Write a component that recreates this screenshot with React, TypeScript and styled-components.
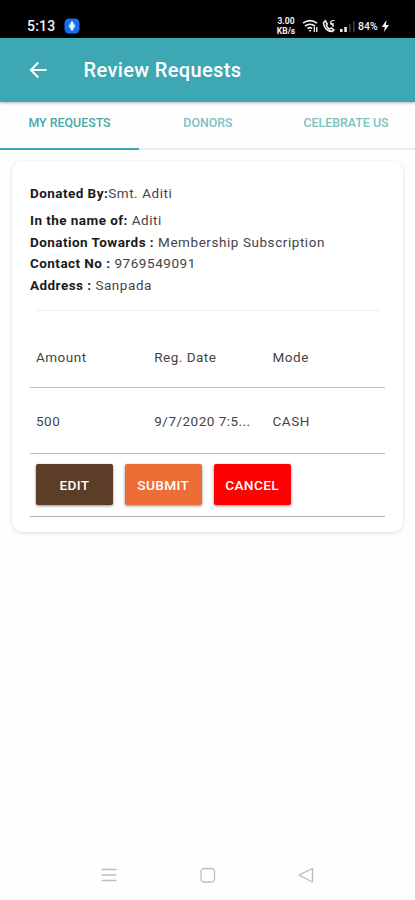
import React from "react";
import styled, { createGlobalStyle } from "styled-components";

const GlobalStyle = createGlobalStyle`
  * { box-sizing: border-box; }
  body { margin: 0; background: #fff; font-family: Roboto, sans-serif; }
`;

const Screen = styled.div`
  width: 415px;
  height: 900px;
  display: flex;
  flex-direction: column;
  background: #fefefe;
  overflow: hidden;
  white-space: nowrap;
`;

const StatusBar = styled.div`
  height: 38px;
  flex: none;
  padding: 14px 25px 0 27px;
  display: flex;
  align-items: center;
  background: #000;
  color: #f2f2f2;
`;

const Clock = styled.span`
  width: 37px;
  font-size: 14px;
  font-weight: 500;
  letter-spacing: 0.2px;
`;

const StatusIcons = styled.div`
  margin-left: auto;
  display: flex;
  align-items: center;
`;

const Speed = styled.div`
  width: 20px;
  margin-right: 6px;
  font-size: 8.5px;
  line-height: 10px;
  font-weight: 700;
  text-align: center;
`;

const Battery = styled.span`
  width: 23px;
  margin-left: 2px;
  font-size: 10.5px;
  font-weight: 500;
`;

const Header = styled.header`
  height: 64px;
  flex: none;
  padding-left: 28.5px;
  display: flex;
  align-items: center;
  gap: 37px;
  background: #3da7b4;
  color: #fff;
  box-shadow: 0 1px 3px rgba(0, 0, 0, 0.3);
  z-index: 1;
`;

const Title = styled.h1`
  margin: 0;
  font-size: 20px;
  font-weight: 500;
  letter-spacing: 0.36px;
`;

const Tabs = styled.nav`
  height: 48px;
  flex: none;
  display: grid;
  grid-template-columns: 139px 138px 138px;
`;

const Tab = styled.div<{ $active?: boolean }>`
  padding-top: 12.5px;
  text-align: center;
  font-size: 12.4px;
  line-height: 15px;
  font-weight: 500;
  color: ${(p) => (p.$active ? "#49a8a8" : "#7dc1bf")};
  border-bottom: 2px solid ${(p) => (p.$active ? "#3da7b4" : "#eeeeee")};
`;

const Card = styled.main`
  width: 391px;
  height: 371px;
  margin: 11px 0 0 12px;
  padding: 22px 18px 0;
  flex: none;
  border-radius: 11px;
  background: #fff;
  box-shadow: 0 1px 4px rgba(0, 0, 0, 0.14);
`;

const Detail = styled.div<{ $lead?: boolean }>`
  height: 21.6px;
  margin-bottom: ${(p) => (p.$lead ? "5.4px" : "0")};
  font-size: 13.5px;
  line-height: 21.6px;
  letter-spacing: 0.56px;
  color: #444;
`;

const Label = styled.b`
  font-weight: 700;
  letter-spacing: 0.45px;
  color: #1a1a1a;
`;

const Divider = styled.div`
  height: 1px;
  margin: 14px 5px 0 6px;
  background: #eeeeee;
`;

const Row = styled.div<{ $height: number; $top?: number }>`
  height: ${(p) => p.$height}px;
  padding: ${(p) => p.$top ?? 0}px 0 0 6px;
  display: grid;
  grid-template-columns: 118.3px 118.3px 1fr;
  align-items: center;
  border-bottom: 1px solid #bdbdbd;
`;

const Cell = styled.div`
  font-size: 13.5px;
  letter-spacing: 0.48px;
  color: #444;
`;

const Actions = styled.div`
  height: 63px;
  padding: 10.5px 0 0 6px;
  display: flex;
  gap: 11.8px;
  border-bottom: 1px solid #b0b0b0;
`;

const Button = styled.button<{ $color: string }>`
  width: 77px;
  height: 41px;
  padding: 0;
  border: 0;
  border-radius: 2px;
  background: ${(p) => p.$color};
  color: #fff;
  font: 500 13.7px Roboto, sans-serif;
  letter-spacing: 0.35px;
  box-shadow: 0 1px 3px rgba(0, 0, 0, 0.45);
`;

const NavBar = styled.footer`
  height: 50px;
  margin-top: auto;
  padding: 0 100px;
  display: flex;
  align-items: center;
  justify-content: space-between;
`;

const NavIcon = ({ d }: { d: string }) => (
  <svg width="18" height="18" viewBox="0 0 18 18" fill="none" stroke="#bdbdbd" strokeWidth="1.3" strokeLinejoin="round">
    <path d={d} />
  </svg>
);

const details = [
  { label: "Donated By:", value: "Smt. Aditi", lead: true },
  { label: "In the name of:", value: " Aditi" },
  { label: "Donation Towards :", value: " Membership Subscription" },
  { label: "Contact No :", value: " 9769549091" },
  { label: "Address :", value: " Sanpada" },
];

export default function App() {
  return (
    <Screen>
      <GlobalStyle />
      <StatusBar>
        <Clock>5:13</Clock>
        <svg width="16" height="16" viewBox="0 0 16 16">
          <rect x=".5" y=".5" width="15" height="15" rx="4.5" fill="#1670e8" />
          <path d="M8 2.5 11.5 8 8 13.5 4.5 8Z" fill="#b5dcff" />
          <path d="M8 4v8M6 8h4" stroke="#fff" strokeWidth="1.2" />
        </svg>
        <StatusIcons>
          <Speed>
            <div>3.00</div>
            <div>KB/s</div>
          </Speed>
          <svg width="17" height="14" viewBox="0 0 17 14" fill="none" stroke="#f2f2f2" strokeWidth="1.6">
            <path d="M1 4.2Q8 -1 15 4.2M3 7Q8 3.5 13 7M5.5 9.5Q8 7.8 10 9.5" />
            <path d="m6.5 11 1.5 2 1.5-2" fill="#f2f2f2" stroke="none" />
            <path d="M12.3 8v5M14.8 8v5" strokeWidth="1.3" />
          </svg>
          <svg width="20" height="14" viewBox="-3 0 20 14" fill="none" stroke="#f2f2f2" strokeWidth="1.6">
            <path d="M3.3 1.8 1.500 3.5C1.5 8.5 5.2 12.4 10.5 12.4l1.3-1.6-2.5-1.9-1.7 1.2C6.2 9.3 5 8 4.3 6.4L5.2 5Z" />
            <path d="M12.5 1.5Q7 1.5 9 5l3 1.7M11 8V4M8.5 3.5l3 3" strokeWidth="1.2" />
          </svg>
          <svg width="17" height="14" viewBox="1 0 17 14" fill="#f2f2f2">
            <path d="M2 10h2.5v3H2zM6.3 8h2.5v5H6.3z" />
            <path d="M11 5h1.7v8H11zM15 2h1.7v11H15z" fill="#393939" />
          </svg>
          <Battery>84%</Battery>
          <svg width="9" height="14" viewBox="0 0 9 14" fill="#f2f2f2">
            <path d="M5.5 1 .8 8h3l-.8 5L8 6H5z" />
          </svg>
        </StatusIcons>
      </StatusBar>
      <Header>
        <svg width="18" height="18" viewBox="0 0 18 18" fill="none" stroke="#fff" strokeWidth="1.9">
          <path d="M17.5 9H2M9.3 1.5 1.8 9l7.5 7.5" />
        </svg>
        <Title>Review Requests</Title>
      </Header>
      <Tabs>
        <Tab $active>MY REQUESTS</Tab>
        <Tab>DONORS</Tab>
        <Tab>CELEBRATE US</Tab>
      </Tabs>
      <Card>
        {details.map((d) => (
          <Detail key={d.label} $lead={d.lead}>
            <Label>{d.label}</Label>
            {d.value}
          </Detail>
        ))}
        <Divider />
        <Row $height={77} $top={15}>
          <Cell>Amount</Cell>
          <Cell>Reg. Date</Cell>
          <Cell>Mode</Cell>
        </Row>
        <Row $height={65.5}>
          <Cell>500</Cell>
          <Cell>9/7/2020 7:5...</Cell>
          <Cell>CASH</Cell>
        </Row>
        <Actions>
          <Button $color="#5b3d28">EDIT</Button>
          <Button $color="#ed6d37">SUBMIT</Button>
          <Button $color="#fc0202">CANCEL</Button>
        </Actions>
      </Card>
      <NavBar>
        <NavIcon d="M1.5 3.5h15M1.5 9h15M1.5 14.5h15" />
        <NavIcon d="M5 2.5h7.5a3 3 0 0 1 3 3v7.5a3 3 0 0 1-3 3H5a3 3 0 0 1-3-3V5.5a3 3 0 0 1 3-3Z" />
        <NavIcon d="M15.5 2.5v13.5L2 9.2Z" />
      </NavBar>
    </Screen>
  );
}
